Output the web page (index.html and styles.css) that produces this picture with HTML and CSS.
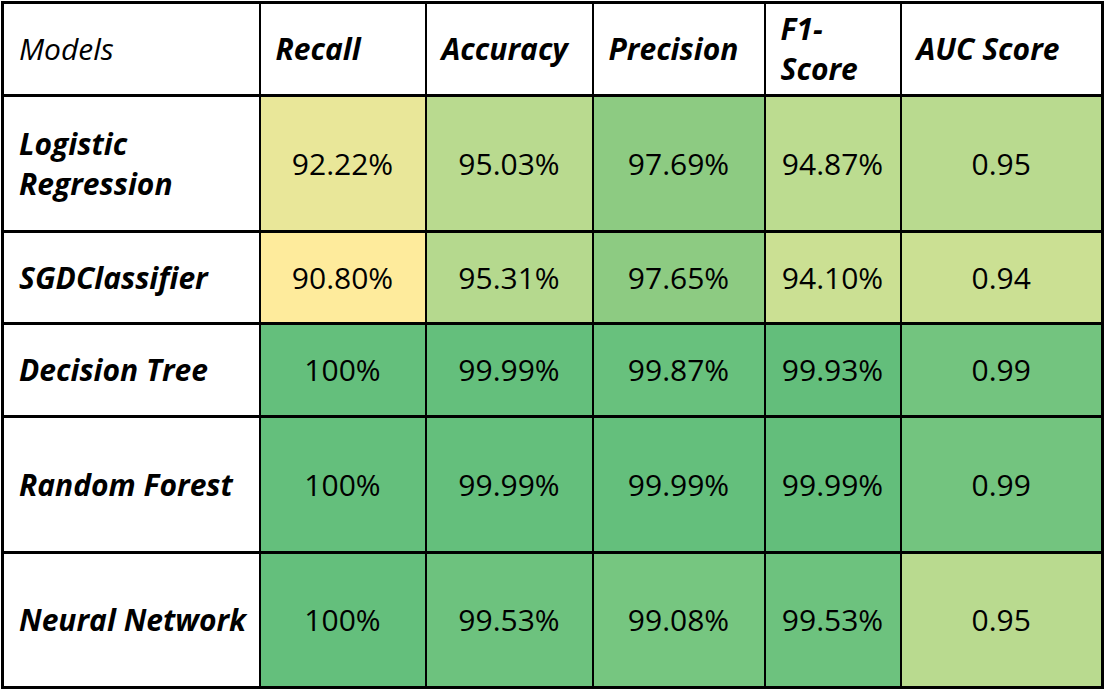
FILE: index.html
```html
<!DOCTYPE html>
<html>
<head>
<meta charset="utf-8">
<link rel="stylesheet" href="styles.css">
</head>
<body>
<table class="results">
  <colgroup>
    <col class="c-model">
    <col class="c-recall">
    <col class="c-acc">
    <col class="c-prec">
    <col class="c-f1">
    <col class="c-auc">
  </colgroup>
  <thead>
    <tr class="r-head">
      <th class="h-models">Models</th>
      <th>Recall</th>
      <th>Accuracy</th>
      <th>Precision</th>
      <th>F1-<br>Score</th>
      <th>AUC Score</th>
    </tr>
  </thead>
  <tbody>
    <tr class="r-tall">
      <th>Logistic Regression</th>
      <td class="yl1">92.22%</td>
      <td class="g5">95.03%</td>
      <td class="g3">97.69%</td>
      <td class="g6">94.87%</td>
      <td class="g5">0.95</td>
    </tr>
    <tr class="r-short">
      <th>SGDClassifier</th>
      <td class="yl2">90.80%</td>
      <td class="g5b">95.31%</td>
      <td class="g3">97.65%</td>
      <td class="g7">94.10%</td>
      <td class="g7">0.94</td>
    </tr>
    <tr class="r-short2">
      <th>Decision Tree</th>
      <td class="g1">100%</td>
      <td class="g1">99.99%</td>
      <td class="g1b">99.87%</td>
      <td class="g0">99.93%</td>
      <td class="g2">0.99</td>
    </tr>
    <tr class="r-tall">
      <th>Random Forest</th>
      <td class="g1">100%</td>
      <td class="g1">99.99%</td>
      <td class="g1">99.99%</td>
      <td class="g0">99.99%</td>
      <td class="g2">0.99</td>
    </tr>
    <tr class="r-tall2">
      <th>Neural Network</th>
      <td class="g1">100%</td>
      <td class="g1c">99.53%</td>
      <td class="g2b">99.08%</td>
      <td class="g1c">99.53%</td>
      <td class="g5">0.95</td>
    </tr>
  </tbody>
</table>
</body>
</html>
```
FILE: styles.css
```css
html, body {
  margin: 0;
  padding: 0;
  background: #ffffff;
}

body {
  padding: 1px 0 0 1px;
  font-family: "Open Sans", "Noto Sans", sans-serif;
  color: #000000;
}

.results {
  border-collapse: collapse;
  table-layout: fixed;
  width: 1102px;
  font-size: 30px;
  border: 3px solid #000000;
}

.c-model { width: 257px; }
.c-recall { width: 166px; }
.c-acc { width: 167px; }
.c-prec { width: 172px; }
.c-f1 { width: 136px; }
.c-auc { width: 202px; }

.results th,
.results td {
  border: 2px solid #000000;
  vertical-align: middle;
  line-height: 40px;
}

.results tr {
  border-top: 3px solid #000000;
}

.results th {
  text-align: left;
  padding: 0 8px 0 15px;
  font-weight: 700;
  font-style: italic;
  background: #ffffff;
}

.results .h-models {
  font-weight: 400;
}

.results td {
  text-align: center;
  padding: 0 4px;
  font-weight: 400;
}

.r-head { height: 93px; }
.r-tall { height: 136px; }
.r-short { height: 92px; }
.r-short2 { height: 93px; }
.r-tall2 { height: 135px; }

.yl1 { background: #e9e799; }
.yl2 { background: #feeb9c; }
.g7 { background: #cbe093; }
.g6 { background: #bcdc90; }
.g5 { background: #b9da8f; }
.g5b { background: #b5d98e; }
.g3 { background: #8dcb82; }
.g2 { background: #73c47f; }
.g2b { background: #76c680; }
.g1c { background: #6dc27e; }
.g1b { background: #68c17d; }
.g1 { background: #64bf7c; }
.g0 { background: #63be7b; }
```
